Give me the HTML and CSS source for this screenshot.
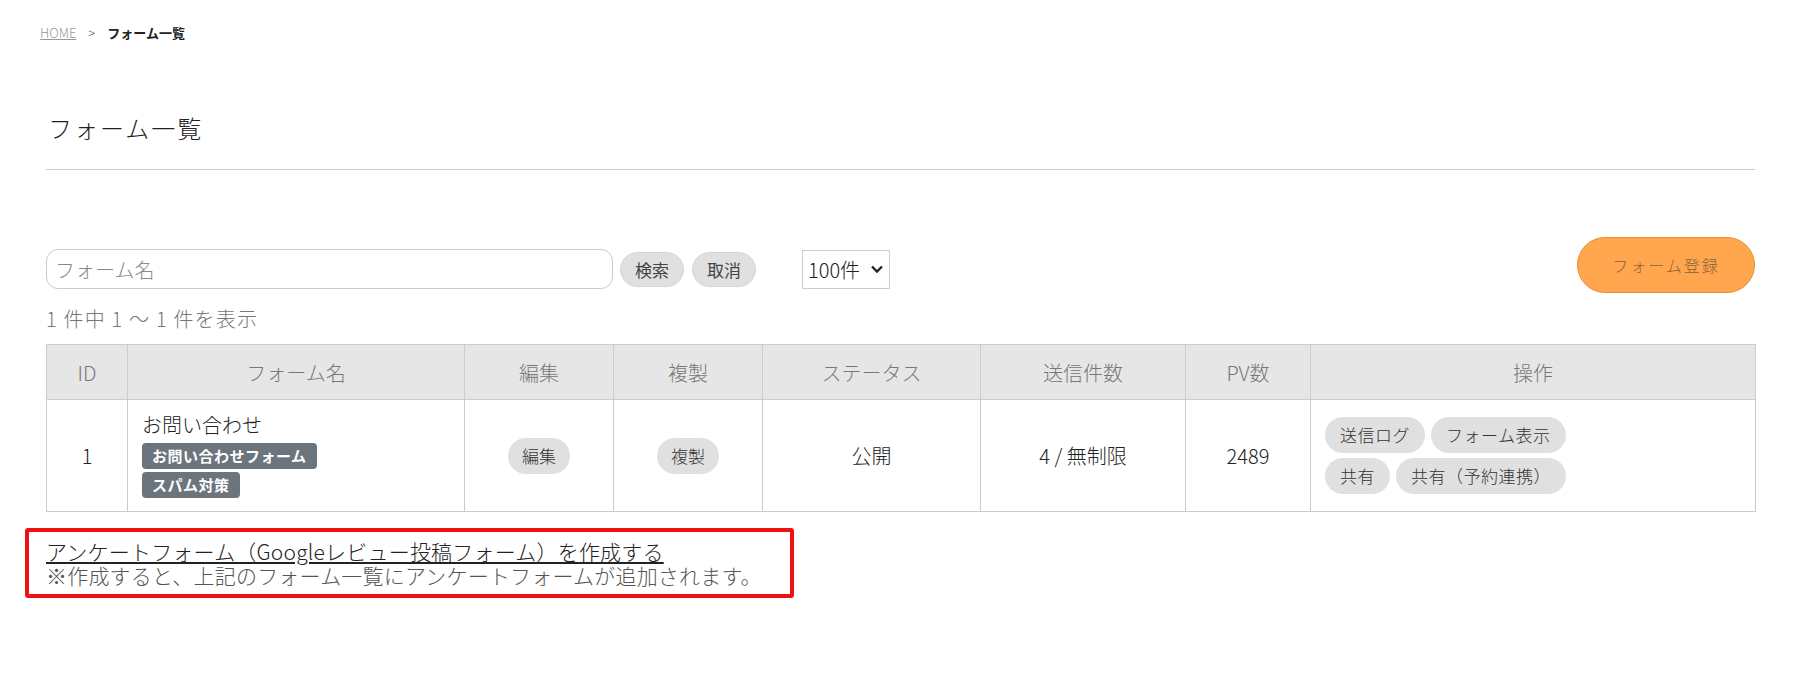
FILE: index.html
```html
<!DOCTYPE html>
<html lang="ja">
<head>
	<meta charset="UTF-8">
	<meta name="viewport" content="width=device-width, initial-scale=1.0">
	<title>フォーム一覧</title>
	<link rel="stylesheet" href="styles.css">
</head>
<body>
	<div class="page">
		<nav class="breadcrumb">
			<a href="#" class="breadcrumb-home">HOME</a>
			<span class="breadcrumb-sep">&gt;</span>
			<span class="breadcrumb-current">フォーム一覧</span>
		</nav>

		<h1 class="page-title">フォーム一覧</h1>

		<div class="toolbar">
			<form class="search">
				<input type="text" class="search-input" placeholder="フォーム名">
				<button type="button" class="btn">検索</button>
				<button type="button" class="btn">取消</button>
				<div class="per-page">
					100件
					<svg width="14" height="10" viewBox="0 0 14 10"><path d="M2 2.5 L7 7.5 L12 2.5" fill="none" stroke="#222" stroke-width="2.4"/></svg>
				</div>
			</form>
			<a href="#" class="btn-register">フォーム登録</a>
		</div>

		<p class="result-count">1 件中 1 ～ 1 件を表示</p>

		<table class="form-table">
			<colgroup>
				<col style="width: 81px">
				<col style="width: 337px">
				<col style="width: 149px">
				<col style="width: 149px">
				<col style="width: 218px">
				<col style="width: 205px">
				<col style="width: 125px">
				<col style="width: 445px">
			</colgroup>
			<thead>
				<tr>
					<th>ID</th>
					<th>フォーム名</th>
					<th>編集</th>
					<th>複製</th>
					<th>ステータス</th>
					<th>送信件数</th>
					<th>PV数</th>
					<th>操作</th>
				</tr>
			</thead>
			<tbody>
				<tr>
					<td>1</td>
					<td class="name-cell">
						<div class="form-name">お問い合わせ</div>
						<div class="badge">お問い合わせフォーム</div>
						<div class="badge">スパム対策</div>
					</td>
					<td><a href="#" class="pill">編集</a></td>
					<td><a href="#" class="pill">複製</a></td>
					<td>公開</td>
					<td>4 / 無制限</td>
					<td>2489</td>
					<td class="ops-cell">
						<div class="ops-row">
							<a href="#" class="pill">送信ログ</a>
							<a href="#" class="pill">フォーム表示</a>
						</div>
						<div class="ops-row">
							<a href="#" class="pill">共有</a>
							<a href="#" class="pill">共有（予約連携）</a>
						</div>
					</td>
				</tr>
			</tbody>
		</table>

		<div class="notice">
			<a href="#" class="notice-link">アンケートフォーム（Googleレビュー投稿フォーム）を作成する</a>
			<div>※作成すると、上記のフォーム一覧にアンケートフォームが追加されます。</div>
		</div>
	</div>
</body>
</html>
```

FILE: styles.css
```css
body {
	margin: 0;
	font-family: "Noto Sans CJK JP", sans-serif;
	font-weight: 300;
	color: #333;
	background: #fff;
}

.page {
	padding: 23px 45px 40px 46px;
}

/* breadcrumb */
.breadcrumb {
	margin-left: -6px;
	font-size: 13px;
	line-height: 20px;
	display: flex;
	gap: 10px;
}

.breadcrumb-home {
	color: #999;
	text-decoration: underline;
}

.breadcrumb-sep {
	color: #666;
	margin-left: 2px;
}

.breadcrumb-current {
	color: #222;
	font-weight: bold;
	margin-left: 2px;
}

.page-title {
	margin: 67px 0 0;
	padding: 0 0 23px 2px;
	font-size: 24px;
	line-height: 36px;
	font-weight: 300;
	letter-spacing: 2px;
	color: #222;
	border-bottom: 1px solid #ccc;
}

/* toolbar */
.toolbar {
	margin-top: 67px;
	display: flex;
	justify-content: space-between;
	align-items: center;
}

.search {
	margin-top: 8px;
	display: flex;
	align-items: center;
}

.search-input {
	width: 567px;
	height: 40px;
	box-sizing: border-box;
	border: 1px solid #ccc;
	border-radius: 12px;
	padding: 0 8px;
	font-family: inherit;
	font-weight: 300;
	font-size: 20px;
	color: #333;
}

.search-input::placeholder {
	color: #888;
}

.btn {
	height: 35px;
	padding: 0 14px;
	margin-left: 7px;
	border: 1px solid #d6d6d6;
	border-radius: 18px;
	background: #e0e0e0;
	color: #444;
	font-family: inherit;
	font-size: 17px;
	cursor: pointer;
}

.btn + .btn {
	margin-left: 8px;
}

.per-page {
	margin-left: 46px;
	width: 88px;
	height: 39px;
	box-sizing: border-box;
	border: 1px solid #ccc;
	padding: 0 5px;
	display: flex;
	align-items: center;
	justify-content: space-between;
	font-size: 20px;
	color: #222;
}

.btn-register {
	width: 178px;
	height: 56px;
	box-sizing: border-box;
	display: flex;
	align-items: center;
	justify-content: center;
	background: #ffa64f;
	border: 1px solid #e8902f;
	border-radius: 28px;
	color: #8c6239;
	font-size: 16px;
	letter-spacing: 2px;
	text-decoration: none;
}

.result-count {
	margin: 12px 0 11px;
	font-size: 20px;
	line-height: 28px;
	letter-spacing: 1.2px;
	color: #777;
}

/* table */
.form-table {
	width: 100%;
	table-layout: fixed;
	border-collapse: collapse;
}

.form-table th,
.form-table td {
	border: 1px solid #ccc;
	text-align: center;
	vertical-align: middle;
	font-size: 20px;
}

.form-table th {
	height: 54px;
	padding: 0;
	background: #e6e6e6;
	color: #777;
	font-weight: 300;
}

.form-table td {
	padding: 0;
	color: #222;
}

.form-table td.name-cell {
	text-align: left;
	padding: 11px 14px 13px;
}

.form-name {
	line-height: 28px;
	margin-bottom: 4px;
}

.badge {
	width: fit-content;
	padding: 0 10px;
	height: 26px;
	line-height: 26px;
	border-radius: 4px;
	background: #6c757d;
	color: #fff;
	font-size: 15px;
	font-weight: bold;
	letter-spacing: 0.5px;
}

.badge + .badge {
	margin-top: 3px;
}

.pill {
	display: inline-block;
	padding: 6px 14px;
	line-height: 24px;
	border-radius: 18px;
	background: #e0e0e0;
	color: #333;
	font-size: 17px;
	text-decoration: none;
}

.form-table td.ops-cell {
	text-align: left;
	padding: 0 14px;
}

.ops-row {
	display: flex;
	gap: 6px;
}

.ops-row + .ops-row {
	margin-top: 5px;
}

.ops-row .pill {
	padding: 6px 15px;
	letter-spacing: 0.5px;
}

/* notice */
.notice {
	margin: 16px 0 0 -21px;
	width: 769px;
	box-sizing: border-box;
	border: 4px solid #ee1111;
	border-radius: 3px;
	padding: 7px 17px 7px;
	font-size: 21px;
	line-height: 24px;
	letter-spacing: 0.2px;
	color: #555;
}

.notice-link {
	color: #222;
	text-decoration: underline;
}
```
